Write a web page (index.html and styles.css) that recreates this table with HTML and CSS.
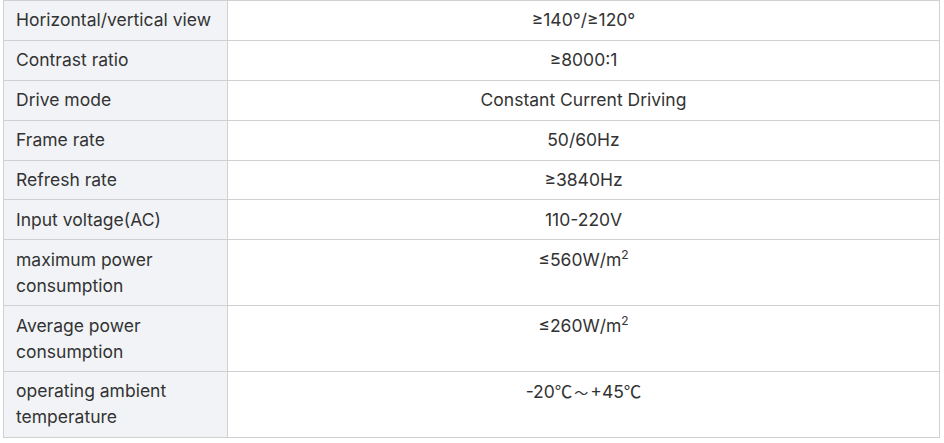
FILE: index.html
```html
<!DOCTYPE html>
<html lang="en">
<head>
<meta charset="utf-8">
<title>Specifications</title>
<link rel="stylesheet" href="styles.css">
</head>
<body>
<div class="wrap">
<table class="spec">
<tbody>
<tr><th>Horizontal/vertical view</th><td>≥140°/≥120°</td></tr>
<tr><th>Contrast ratio</th><td>≥8000:1</td></tr>
<tr><th>Drive mode</th><td>Constant Current Driving</td></tr>
<tr><th>Frame rate</th><td>50/60Hz</td></tr>
<tr><th>Refresh rate</th><td>≥3840Hz</td></tr>
<tr><th>Input voltage(AC)</th><td>110-220V</td></tr>
<tr><th>maximum power consumption</th><td>≤560W/m<sup>2</sup></td></tr>
<tr><th>Average power consumption</th><td>≤260W/m<sup>2</sup></td></tr>
<tr><th>operating ambient temperature</th><td>-20<span class="cjk">℃</span><span class="tilde">～</span>+45<span class="cjk">℃</span></td></tr>
</tbody>
</table>
</div>
</body>
</html>
```
FILE: styles.css
```css
html, body {
  margin: 0;
  padding: 0;
  background: #ffffff;
}
.wrap {
  padding: 0 0 0 3px;
}
.spec {
  width: 937px;
  border-collapse: collapse;
  font-family: Inter, "Noto Sans", sans-serif;
  font-size: 17.5px;
  line-height: 26px;
  color: #333333;
}
.spec th,
.spec td {
  border: 1px solid #d0d0d0;
  padding: 6.45px 12px;
  vertical-align: top;
  font-weight: 400;
}
.spec th {
  width: 199px;
  text-align: left;
  background: #f2f3f7;
}
.spec td {
  text-align: center;
  background: #ffffff;
}
.spec sup {
  font-size: 12px;
  line-height: 0;
  vertical-align: 7px;
}
.cjk {
  font-family: "Noto Sans CJK SC", sans-serif;
}
.tilde {
  font-family: "Noto Sans CJK SC", sans-serif;
  font-size: 14px;
  padding: 0 2px;
}
```
